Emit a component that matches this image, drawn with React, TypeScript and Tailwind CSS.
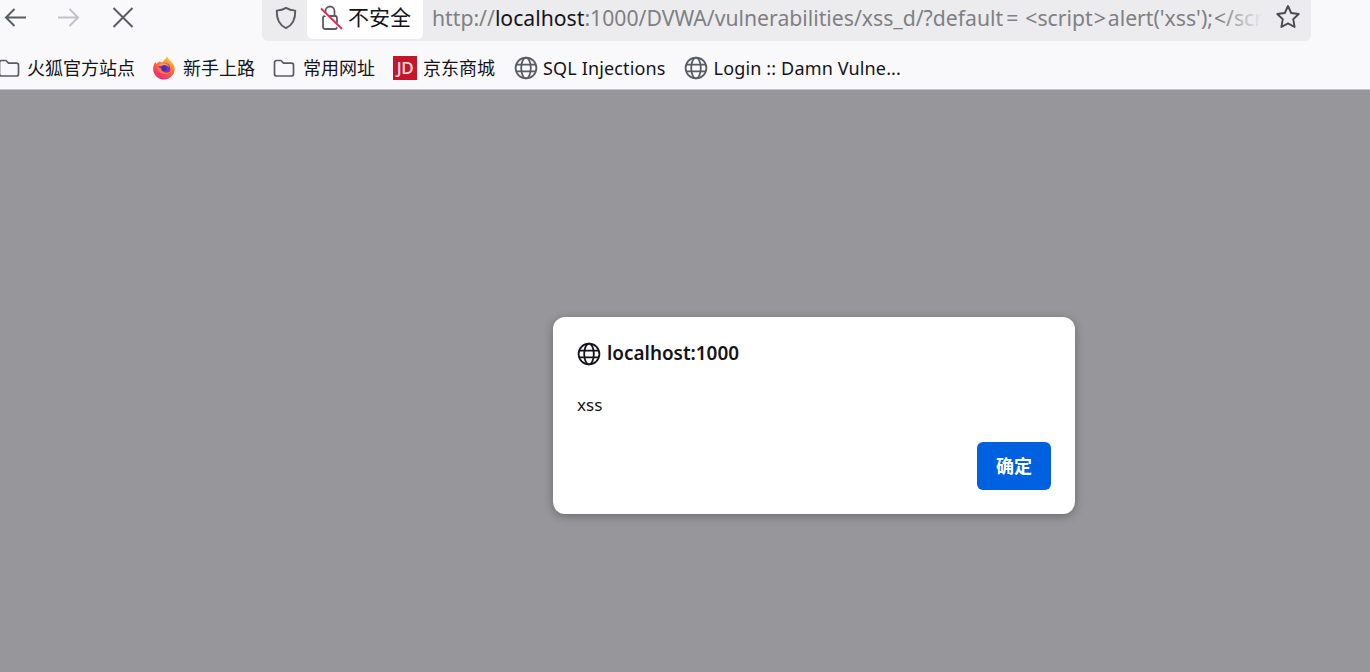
const FONT = "font-['Noto_Sans','Noto_Sans_CJK_SC',sans-serif]";

const GlobeIcon = ({ size = 24, color = "#5b5b66", width = 1.8 }: { size?: number; color?: string; width?: number }) => (
  <svg width={size} height={size} viewBox="0 0 24 24" fill="none" stroke={color} strokeWidth={width}>
    <circle cx="12" cy="12" r="10.4" />
    <ellipse cx="12" cy="12" rx="4.8" ry="10.4" />
    <path d="M2 8.6h20M2 15.4h20" />
  </svg>
);

const FolderIcon = () => (
  <svg width="24" height="24" viewBox="0 0 24 24" fill="none" stroke="#5b5b66" strokeWidth="1.7">
    <path d="M2.5 6.5a2 2 0 0 1 2-2h4.400l2.600 2.600h8a2 2 0 0 1 2 2V18a2 2 0 0 1-2 2h-15a2 2 0 0 1-2-2z" strokeLinejoin="round" />
  </svg>
);

const FirefoxIcon = () => (
  <svg width="24" height="24" viewBox="0 0 24 24">
    <defs>
      <linearGradient id="fx" x1="0.8" y1="0.05" x2="0.3" y2="0.95">
        <stop offset="0" stopColor="#ffd53a" />
        <stop offset="0.4" stopColor="#ff7a2c" />
        <stop offset="1" stopColor="#f2257e" />
      </linearGradient>
    </defs>
    <path d="M15 0.300c0.800 2.400 2.800 3.600 4.400 5.600 1.800 2.200 3.300 4.200 3.300 6.800A10.800 10.800 0 0 1 1.100 12.800c0-2.400 0.800-5 2.400-6.800l1 2c0.800-1.200 2-2.200 3.400-2.600 0.600 0.500 1.600 1 2.600 1.100C11.500 4.400 14 3 15 0.300z" fill="url(#fx)" />
    <circle cx="12.300" cy="12.800" r="6" fill="#7b2fd0" />
    <circle cx="12.200" cy="12.600" r="2.500" fill="#4a2aa8" />
    <path d="M6.400 9.400c1.600-2 5-3 7.800-1.800 1.800 0.800 2.800 2.400 3 4-1-1.600-2.600-2.600-4.600-2.600-1.400 0-2.400 0.400-3 1z" fill="#ffa02c" />
    <path d="M5.400 11c0 4 3 7.400 7.200 7.400 2.400 0 4.200-1 5.400-2.600-1.400 0.800-3.200 1-4.800 0.600-2.800-0.600-4.400-2.600-4.600-4.400z" fill="#ff7a2c" />
  </svg>
);

const Bookmark = ({ icon, label, className }: { icon: React.ReactNode; label: string; className: string }) => (
  <div className={`flex items-center shrink-0 ${className}`}>
    {icon}
    <span className="text-[18px] leading-[24px] text-[#15141a] whitespace-nowrap">{label}</span>
  </div>
);

export default function App() {
  return (
    <div className={`flex flex-col w-[1370px] h-[672px] overflow-hidden bg-[#97969a] ${FONT}`}>
      {/* toolbar */}
      <div className="flex bg-[#f9f9fb] h-[48px] shrink-0">
        <div className="flex items-start w-[262px] shrink-0 pl-[3px] pt-[5px]">
          <svg width="25" height="25" viewBox="0 0 25 25" fill="none" stroke="#5b5b66" strokeWidth="2">
            <path d="M23 12.500H3M11.500 4l-8.500 8.500 8.500 8.500" />
          </svg>
          <svg className="ml-[28px]" width="25" height="25" viewBox="0 0 25 25" fill="none" stroke="#c3c3c7" strokeWidth="2">
            <path d="M2 12.500h20M13.500 4l8.500 8.500-8.500 8.500" />
          </svg>
          <svg className="ml-[30px]" width="24" height="25" viewBox="0 0 24 25" fill="none" stroke="#5b5b66" strokeWidth="2">
            <path d="M2.500 3l19 19M21.500 3l-19 19" />
          </svg>
        </div>
        <div className="relative flex items-start w-[1049px] h-[41px] bg-[#ececee] rounded-b-[6px]">
          <div className="w-[47px] h-[36px] flex items-center justify-center shrink-0">
            <svg width="24" height="24" viewBox="0 0 24 26" fill="none" stroke="#5b5b66" strokeWidth="2.100">
              <path d="M12 2c3 1.800 6 2.600 10 3 .3 8.500-2.500 15.500-10 19C4.500 20.500 1.700 13.500 2 5c4-.4 7-1.200 10-3z" strokeLinejoin="round" />
            </svg>
          </div>
          <div className="flex items-center h-[39px] w-[116px] -ml-[2px] bg-white rounded-b-[6px] shrink-0 pl-[13px] pb-[5px]">
            <svg width="23" height="27" viewBox="0 0 23 27" fill="none">
              <path d="M5.500 12V7a4.500 4.500 0 0 1 9 0v5" stroke="#5b5b66" strokeWidth="1.800" />
              <path d="M5 12h10a2 2 0 0 1 2 2v9a2 2 0 0 1-2 2H5a2 2 0 0 1-2-2v-9a2 2 0 0 1 2-2z" stroke="#5b5b66" strokeWidth="1.800" />
              <path d="M1 5.800l21 20" stroke="#ffffff" strokeWidth="3" />
              <path d="M1 4.500l21 20.500" stroke="#e22850" strokeWidth="1.800" />
            </svg>
            <span className="ml-[5px] text-[21px] leading-[28px] text-[#15141a] whitespace-nowrap">不安全</span>
          </div>
          <div className="ml-[9px] w-[831px] overflow-hidden whitespace-nowrap text-[21.200px] leading-[35px] text-[#808084] relative">
            <span>http://</span>
            <span className="text-[#15141a]">localhost</span>
            <span>:1000/DVWA/vulnerabilities/xss_d/?default</span>
            <span className="ml-[3px]">=</span>
            <span className="ml-[7px]">&lt;</span>
            <span>script</span>
            <span className="ml-[1px]">&gt;</span>
            <span className="ml-[2px]">alert('xss');</span>
            <span className="ml-[1px]">&lt;/script&gt;</span>
            <div className="absolute right-0 top-0 h-full w-[44px] bg-gradient-to-r from-transparent to-[#ececee]" />
          </div>
          <div className="ml-[12px] mt-[4px] shrink-0">
            <svg width="26" height="26" viewBox="0 0 26 26" fill="none" stroke="#4a4a52" strokeWidth="1.900">
              <path d="M13 2l3.200 7 7.500 1-5.500 5.200 1.400 7.800L13 19.400 6.400 23l1.400-7.800L2.300 10l7.500-1z" strokeLinejoin="round" />
            </svg>
          </div>
        </div>
      </div>

      {/* bookmarks */}
      <div className="flex items-center h-[42px] shrink-0 bg-[#f9f9fb] border-b border-[#c6c6ca] pb-[2px] -ml-[3px]">
        <Bookmark icon={<FolderIcon />} label="火狐官方站点" className="gap-[6px]" />
        <Bookmark icon={<FirefoxIcon />} label="新手上路" className="ml-[17px] gap-[7px]" />
        <Bookmark icon={<FolderIcon />} label="常用网址" className="ml-[17px] gap-[7px]" />
        <Bookmark
          icon={
            <span className="flex items-center justify-center w-[24px] h-[24px] bg-[#c4162a] text-[#f8e0e2] text-[17px] font-medium leading-none tracking-[-0.5px]">
              JD
            </span>
          }
          label="京东商城"
          className="ml-[18px] gap-[6px]"
        />
        <Bookmark icon={<GlobeIcon />} label="SQL Injections" className="ml-[19px] gap-[5px] tracking-[0.15px]" />
        <Bookmark icon={<GlobeIcon />} label="Login :: Damn Vulne..." className="ml-[18px] gap-[6px] tracking-[0.15px]" />
      </div>

      {/* page with the alert dialog */}
      <div className="flex-1 pl-[553px] pt-[227px]">
        <div className="w-[522px] h-[197px] bg-white rounded-[12px] shadow-[0_2px_10px_rgba(0,0,0,0.3)] px-[24px] pt-[24px]">
          <div className="flex items-center h-[26px] gap-[6px]">
            <GlobeIcon color="#15141a" />
            <span className="text-[18.900px] leading-[24px] pb-[2px] font-semibold text-[#15141a]">localhost:1000</span>
          </div>
          <div className="mt-[26px] text-[17px] leading-[24px] text-[#15141a]">xss</div>
          <div className="flex justify-end mt-[25px]">
            <button className="w-[74px] h-[48px] rounded-[6px] bg-[#0061e0] text-white text-[18px] font-bold">确定</button>
          </div>
        </div>
      </div>
    </div>
  );
}
